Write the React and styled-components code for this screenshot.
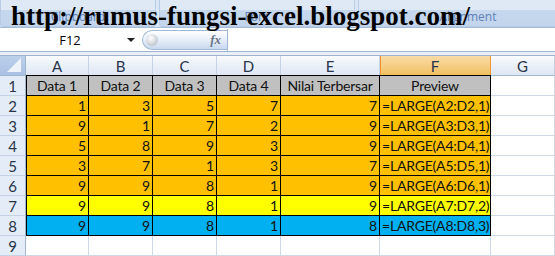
import React from "react";
import styled, { createGlobalStyle } from "styled-components";

const GlobalStyle = createGlobalStyle`
	html, body {
		margin: 0;
		padding: 0;
		background: #ffffff;
		overflow: hidden;
	}
	body {
		font-family: Lato, "Open Sans", sans-serif;
	}
`;

const columns = [
	{ id: "A", width: 63 },
	{ id: "B", width: 64 },
	{ id: "C", width: 64 },
	{ id: "D", width: 64 },
	{ id: "E", width: 99 },
	{ id: "F", width: 111 },
	{ id: "G", width: 64 },
];

const fills = {
	grey: "#c0c0c0",
	orange: "#ffc000",
	yellow: "#ffff00",
	blue: "#00b0f0",
};

const rows = [
	{ fill: "grey", cells: ["Data 1", "Data 2", "Data 3", "Data 4", "Nilai Terbersar", "Preview"], head: true },
	{ fill: "orange", cells: [1, 3, 5, 7, 7, "=LARGE(A2:D2,1)"] },
	{ fill: "orange", cells: [9, 1, 7, 2, 9, "=LARGE(A3:D3,1)"] },
	{ fill: "orange", cells: [5, 8, 9, 3, 9, "=LARGE(A4:D4,1)"] },
	{ fill: "orange", cells: [3, 7, 1, 3, 7, "=LARGE(A5:D5,1)"] },
	{ fill: "orange", cells: [9, 9, 8, 1, 9, "=LARGE(A6:D6,1)"] },
	{ fill: "yellow", cells: [9, 9, 8, 1, 9, "=LARGE(A7:D7,2)"] },
	{ fill: "blue", cells: [9, 9, 8, 1, 8, "=LARGE(A8:D8,3)"] },
	{ fill: null, cells: [] },
];

const App = () => {
	return (
		<Page>
			<GlobalStyle />
			<Ribbon>
				<Group $width={156}>
					<GroupLabel>Clipboard</GroupLabel>
				</Group>
				<Group $width={196}>
					<GroupLabel>Font</GroupLabel>
				</Group>
				<Group $width={220}>
					<GroupLabel>Alignment</GroupLabel>
				</Group>
				<Watermark>http://rumus-fungsi-excel.blogspot.com/</Watermark>
			</Ribbon>

			<FormulaBar>
				<NameBox>
					<span>F12</span>
					<DropArrow />
				</NameBox>
				<FxPill>
					<Knob />
					<Fx>fx</Fx>
				</FxPill>
				<FormulaInput />
			</FormulaBar>
			<Divider />

			<Sheet $cols={columns.map(c => c.width + "px").join(" ")}>
				<Corner>
					<svg width="14" height="14" viewBox="0 0 14 14">
						<polygon points="14,0 14,14 0,14" fill="#eef3fa" />
					</svg>
				</Corner>
				{columns.map(col => (
					<ColHead key={col.id} $active={col.id === "F"}>{col.id}</ColHead>
				))}
				{rows.map((row, r) => (
					<React.Fragment key={r}>
						<RowHead>{r + 1}</RowHead>
						{columns.map((col, c) => {
							const value = row.cells[c];
							const filled = row.fill && c < 6;
							return (
								<Cell
									key={col.id}
									$fill={filled ? fills[row.fill] : null}
									$align={row.head ? "center" : typeof value === "number" ? "right" : "left"}
									$top={r === 0 && c < 6}
									$left={filled && c === 0}
								>
									{value}
								</Cell>
							);
						})}
					</React.Fragment>
				))}
			</Sheet>
		</Page>
	);
};

export default App;

const Page = styled.div`
	width: 555px;
	height: 256px;
	overflow: hidden;
	background: #ffffff;
`;

const Ribbon = styled.div`
	position: relative;
	display: flex;
	gap: 3px;
	height: 28px;
	background: #dbe6f4;
	border-bottom: 1px solid #a7bcd8;
	box-sizing: border-box;
`;

const Group = styled.div`
	display: flex;
	flex-direction: column;
	justify-content: flex-end;
	flex-shrink: 0;
	width: ${p => p.$width}px;
	height: 27px;
	border: 1px solid #b8cce6;
	border-top: none;
	border-radius: 0 0 3px 3px;
	background: linear-gradient(#dfe9f6 0%, #dfe9f6 38%, #c6d8ee 40%, #c2d5ec 100%);
	box-sizing: border-box;
`;

const GroupLabel = styled.div`
	height: 18px;
	font-family: "Open Sans", sans-serif;
	font-size: 12px;
	line-height: 18px;
	color: #6282b8;
	text-align: center;
`;

const Watermark = styled.div`
	position: absolute;
	left: 11px;
	top: 1px;
	font-family: "Liberation Serif", serif;
	font-weight: bold;
	font-size: 27px;
	line-height: 30px;
	color: #000000;
	white-space: nowrap;
`;

const FormulaBar = styled.div`
	display: flex;
	align-items: center;
	height: 22px;
	margin-top: 1px;
	background: #ffffff;
`;

const NameBox = styled.div`
	position: relative;
	display: flex;
	align-items: center;
	justify-content: center;
	width: 140px;
	height: 100%;
	font-family: "Open Sans", sans-serif;
	font-size: 13px;
	color: #000000;
	box-sizing: border-box;
`;

const DropArrow = styled.span`
	position: absolute;
	right: 5px;
	top: 9px;
	border-left: 4px solid transparent;
	border-right: 4px solid transparent;
	border-top: 4px solid #222222;
`;

const FxPill = styled.div`
	display: flex;
	align-items: center;
	justify-content: space-between;
	width: 85px;
	height: 20px;
	margin-left: 2px;
	padding: 0 6px 0 3px;
	border: 1px solid #a3b8d6;
	border-right: none;
	border-radius: 10px 0 0 10px;
	background: linear-gradient(#ffffff 0%, #e6eef9 50%, #c9d9ef 100%);
	box-sizing: border-box;
`;

const Knob = styled.span`
	width: 12px;
	height: 12px;
	border-radius: 50%;
	background: radial-gradient(circle at 40% 35%, #ffffff 0%, #d5d9e0 50%, #a9b0bb 100%);
`;

const Fx = styled.span`
	font-family: "Liberation Serif", serif;
	font-style: italic;
	font-weight: bold;
	font-size: 13px;
	color: #6d7787;
`;

const FormulaInput = styled.div`
	flex: 1;
	height: 100%;
	border-left: 1px solid #a3b8d6;
	background: #ffffff;
`;

const Divider = styled.div`
	height: 3px;
	border-top: 1px solid #9eb3cf;
	border-bottom: 1px solid #9eb3cf;
	background: #e9eff7;
`;

const Sheet = styled.div`
	display: grid;
	grid-template-columns: 26px ${p => p.$cols};
	grid-auto-rows: 20px;
	font-family: Lato, "Open Sans", sans-serif;
	font-size: 14px;
`;

const Corner = styled.div`
	display: flex;
	align-items: flex-end;
	justify-content: flex-end;
	padding: 0 4px 3px 0;
	background: linear-gradient(#bcd0ea, #a9c1e3);
	border-right: 1px solid #9eb6ce;
	border-bottom: 1px solid #9eb6ce;
	box-sizing: border-box;
`;

const ColHead = styled.div`
	display: flex;
	align-items: center;
	justify-content: center;
	font-size: 15px;
	color: #28354a;
	background: ${p => p.$active
		? "linear-gradient(#f9dba5 0%, #f6cf87 50%, #f1c15f 100%)"
		: "linear-gradient(#f9fbfd 0%, #eaf0f8 50%, #dfe7f3 100%)"};
	border-right: 1px solid ${p => p.$active ? "#f29536" : "#c5d2e3"};
	border-bottom: 1px solid ${p => p.$active ? "#f29536" : "#9eb6ce"};
	${p => p.$active && "box-shadow: inset 1px 0 0 #f29536;"}
	box-sizing: border-box;
`;

const RowHead = styled.div`
	display: flex;
	align-items: center;
	justify-content: center;
	font-size: 15px;
	color: #28354a;
	background: #e4ecf7;
	border-right: 1px solid #9eb6ce;
	border-bottom: 1px solid #c5d2e3;
	box-sizing: border-box;
`;

const Cell = styled.div`
	display: flex;
	align-items: center;
	justify-content: ${p => p.$align === "right" ? "flex-end" : p.$align === "center" ? "center" : "flex-start"};
	padding: 0 2px;
	overflow: hidden;
	white-space: nowrap;
	letter-spacing: -0.2px;
	color: #111111;
	background: ${p => p.$fill || "#ffffff"};
	border-right: 1px solid ${p => p.$fill ? "#000000" : "#d0d7e5"};
	border-bottom: 1px solid ${p => p.$fill ? "#000000" : "#d0d7e5"};
	${p => p.$left && "box-shadow: inset 1px 0 0 #000000;"}
	${p => p.$top && "border-top: 1px solid #000000; margin-top: -1px;"}
	box-sizing: border-box;
`;
